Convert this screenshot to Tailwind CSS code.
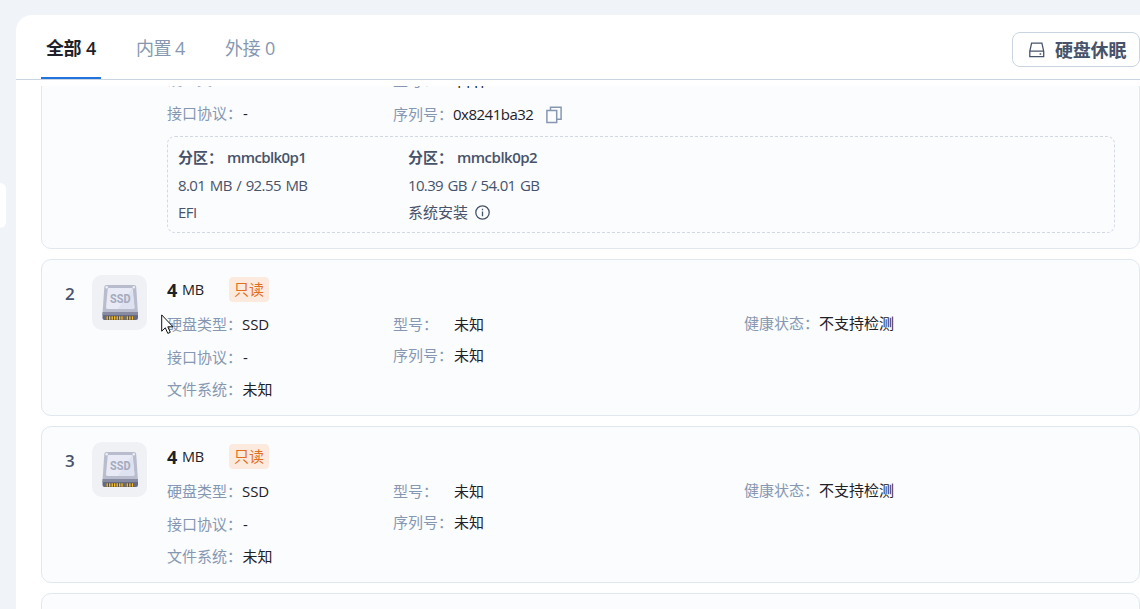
<!DOCTYPE html>
<html lang="zh-CN">
<head>
    <meta charset="UTF-8">
    <meta name="viewport" content="width=device-width, initial-scale=1.0">
    <title>硬盘管理</title>
    <script src="https://cdn.jsdelivr.net/npm/@tailwindcss/browser@4"></script>
</head>
<body class="relative h-[609px] overflow-hidden bg-[#f0f4f9] pt-[15px] pl-4 font-['Open_Sans','Noto_Sans_CJK_SC',sans-serif] text-[15px] text-[#1e2128]">
    <!-- sidebar handle -->
    <div class="absolute left-0 top-[183px] h-[45px] w-1.5 rounded-r-md bg-white"></div>

    <main class="flex h-[594px] flex-col overflow-hidden rounded-tl-[16px] bg-white">
        <header class="flex h-[65px] shrink-0 items-start justify-between border-b border-[#cbd5e1] pl-[25px]">
            <nav class="flex h-16 text-[18px] leading-[67px] text-[#8698b1]">
                <div class="w-[60px] border-b-2 border-[#2373dc] pl-[5px] font-bold whitespace-nowrap text-[#1e2128]"><span class="inline-block w-[36px] tracking-[-0.5px]">全部</span><span class="pl-[4px] font-semibold">4</span></div>
                <div class="ml-[35px] w-[53px] whitespace-nowrap"><span class="inline-block w-[36px] tracking-[-0.5px]">内置</span><span class="pl-[3px]">4</span></div>
                <div class="ml-[36px] whitespace-nowrap"><span class="inline-block w-[36px] tracking-[-0.5px]">外接</span><span class="pl-[4px]">0</span></div>
            </nav>
            <button class="mt-[17px] flex h-[35px] w-[128px] items-center rounded-lg border border-[#cbd5e1] pt-0.5 pl-4 text-[18px] font-bold text-[#47536b]">
                <svg class="mr-[10px] mb-0.5 h-4 w-4" viewBox="0 0 16 16" fill="none" stroke="currentColor" stroke-width="1.3">
                    <path d="M.8 9.200 2.600 1.200h10.300l1.800 8v5.400H.8zM.8 9.200h13.900M10.600 12h1.600"/>
                </svg>
                <span class="tracking-[-0.2px] whitespace-nowrap">硬盘休眠</span>
            </button>
        </header>

        <div class="mt-1.5 flex-1 overflow-hidden pl-[25px]">
            <div id="disks" class="-mt-20 flex flex-col gap-2.5">
                <section class="h-[243px] rounded-[10px] border border-[#e0e7ef] bg-[#fbfcfe] pl-[125px]">
                    <div class="flex pt-[59px] leading-[22px]">
                        <div class="w-[226px] pt-[2px]">
                            <div class="flex h-[34px]"><span class="w-[75px] text-[#8698b1]">硬盘类型：</span></div>
                            <div class="flex"><span class="w-[76px] text-[#8698b1]">接口协议：</span>-</div>
                        </div>
                        <div class="pt-[3px]">
                            <div class="flex h-[34px]"><span class="w-[62px] text-[#8698b1]">型号：</span><span class="pt-[2px]">Y1TI</span></div>
                            <div class="flex items-center"><span class="w-[60px] text-[#8698b1]">序列号：</span><span class="w-[93px] tracking-[-0.5px]">0x8241ba32</span>
                                <svg class="mt-px h-[18px] w-4" viewBox="0 0 16 18" fill="none" stroke="#8698b1" stroke-width="1.5"><path d="M4.500 4V1.200h10.600v12H11M.9 4.400h9.800v12.200H.9z"/></svg>
                            </div>
                        </div>
                    </div>
                    <div class="mt-[11px] flex h-[97px] w-[948px] rounded-lg border border-dashed border-[#d2d9e4] pt-[7px] pl-[10px] leading-[27.5px] text-[#47536b]">
                        <div class="w-[230px]">
                            <div class="flex font-semibold"><span class="w-[49px] font-bold">分区：</span><span class="tracking-[-0.6px]">mmcblk0p1</span></div>
                            <div class="tracking-[-0.6px] [word-spacing:1.2px]">8.01 MB / 92.55 MB</div>
                            <div class="tracking-[-0.5px]">EFI</div>
                        </div>
                        <div>
                            <div class="flex font-semibold"><span class="w-[49px] font-bold">分区：</span><span class="tracking-[-0.5px]">mmcblk0p2</span></div>
                            <div class="tracking-[-0.65px] [word-spacing:1.2px]">10.39 GB / 54.01 GB</div>
                            <div class="flex items-center gap-[7px]">系统安装
                                <svg class="h-[15px] w-[15px]" viewBox="0 0 15 15" fill="none" stroke="currentColor" stroke-width="1.3"><circle cx="7.500" cy="7.500" r="6.700"/><path d="M7.500 6.500v4.800M7.500 3.800v1.500"/></svg>
                            </div>
                        </div>
                    </div>
                </section>
            </div>
        </div>
    </main>

    <template id="disk">
        <section class="flex h-[157px] shrink-0 rounded-[10px] border border-[#e0e7ef] bg-[#fbfcfe] leading-[22px]">
            <div class="no w-[50px] pt-[23px] pl-[23px] text-[17px] font-semibold text-[#47536b]"></div>
            <div class="mt-[15px] flex h-[55px] w-[55px] items-center justify-center rounded-[10px] bg-[#f0f1f5]">
                <svg class="h-[37px] w-[38px]" viewBox="0 0 38 37">
                    <path d="M5.500 1h27.500q2 0 2.200 2L37 30H1.500L3.300 3q.2-2 2.200-2z" fill="#b8bccd"/>
                    <path d="M1.500 30h35.500v4q0 2-2 2h-31.500q-2 0-2-2z" fill="#666b83"/>
                    <path d="M1.500 28h35.500v3h-35.500z" fill="#868ba1"/>
                    <path d="M8 4h22.500q1.200 0 1.300 1.200l1.700 18q0 1.800-1.800 1.800h-25q-1.800 0-1.700-1.800l1.700-18q.1-1.200 1.300-1.200z" fill="#e8eaf5"/>
                    <path d="M31 4.500 17 25h14.700q1.800 0 1.800-1.800z" fill="#dee1ef"/>
                    <path d="M5 32h17v4h-17zM25 32h8v4h-8z" fill="#5b4f45"/>
                    <path d="M6.200 32.300v3.500M8.700 32.300v3.500M11.200 32.300v3.500M13.700 32.300v3.500M16.200 32.300v3.500M18.700 32.300v3.500M21 32.300v3.500M26.300 32.300v3.500M28.900 32.300v3.500M31.500 32.300v3.500" stroke="#f0bf37" stroke-width="1.400"/>
                    <g fill="#eef0f7"><circle cx="5.700" cy="3.300" r="1.200"/><circle cx="32.800" cy="3.300" r="1.200"/></g>
                    <text x="9" y="18.800" textLength="20.500" lengthAdjust="spacingAndGlyphs" font-family="Roboto" font-size="12.500" font-weight="700" fill="#a5aabd">SSD</text>
                </svg>
            </div>
            <div class="w-[226px] pt-[19px] pl-[20px]">
                <div class="flex h-[34px]">
                    <span class="w-[15px] text-[18px] font-bold">4</span><span class="w-[47px] text-[14.5px] tracking-[-0.4px]">MB</span>
                    <span class="-mt-[2px] h-[25px] w-10 rounded bg-[#fdeade] text-center leading-[24px] text-[#e06f1f]">只读</span>
                </div>
                <div class="flex h-[33px]"><span class="w-[75px] text-[#8698b1]">硬盘类型：</span><span class="tracking-[-0.1px]">SSD</span></div>
                <div class="flex h-[32px]"><span class="w-[76px] text-[#8698b1]">接口协议：</span>-</div>
                <div class="flex"><span class="w-[75.5px] text-[#8698b1]">文件系统：</span>未知</div>
            </div>
            <div class="w-[351px] pt-[53px] pl-[20px]">
                <div class="flex h-[31px]"><span class="w-[61px] text-[#8698b1]">型号：</span>未知</div>
                <div class="flex"><span class="w-[61px] text-[#8698b1]">序列号：</span>未知</div>
            </div>
            <div class="flex pt-[52px] pl-[20px]"><span class="w-[75px] text-[#8698b1]">健康状态：</span>不支持检测</div>
        </section>
    </template>

    <!-- mouse pointer -->
    <svg class="absolute left-[161px] top-[314px] h-[20px] w-[13px]" viewBox="0 0 13 20"><path d="M.7.9v16.300l3.600-3.400 2.500 5.600 2.500-1.100-2.500-5.500h5.200z" fill="#fff" stroke="#111" stroke-width="1"/></svg>

    <script>
        const list = document.getElementById('disks');
        [2, 3, 4].forEach(n => {
            const card = document.getElementById('disk').content.cloneNode(true);
            card.querySelector('.no').textContent = n;
            list.appendChild(card);
        });
    </script>
</body>
</html>
